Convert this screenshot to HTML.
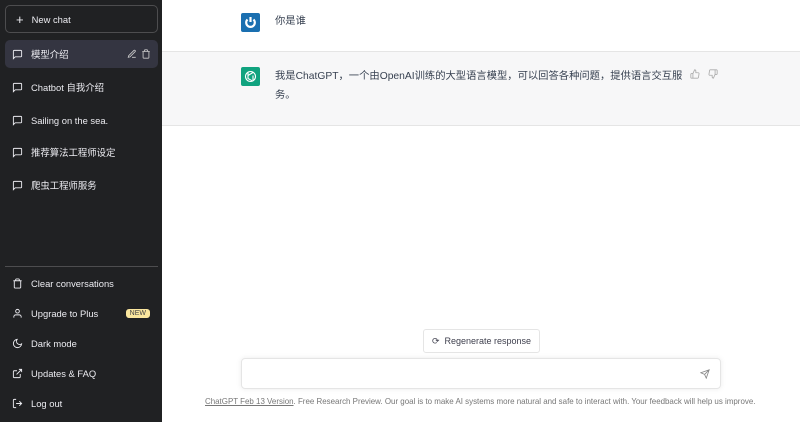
<!DOCTYPE html>
<html><head><meta charset="utf-8"><style>
*{margin:0;padding:0;box-sizing:border-box}
body{width:800px;height:422px;overflow:hidden;font-family:"Liberation Sans","Noto Sans CJK SC",sans-serif;background:#fff;position:relative}
.sb{position:absolute;left:0;top:0;width:162px;height:422px;background:#202123;color:#ececf1;font-size:9.4px}
.nc{position:absolute;left:5px;top:5px;width:153px;height:28px;border:1px solid #4d4d4f;border-radius:5px;display:flex;align-items:center;padding-left:10px}
.it{position:absolute;left:5px;width:153px;height:28px;display:flex;align-items:center;padding-left:7px;border-radius:5px}
.it svg{margin-right:8px;flex:none}
.sel{background:#343541}
.sep{position:absolute;left:5px;top:266px;width:153px;border-top:1px solid #4d4d4f}
.new{position:absolute;right:8px;background:#fae69e;color:#444;font-size:7px;padding:1px 4px;border-radius:3px}
.row{position:absolute;left:162px;width:638px}
.av{position:absolute;left:79px;width:19px;height:19px;border-radius:2px}
.tx{position:absolute;left:113px;font-size:10.3px;color:#374151;line-height:19px}
</style></head><body>
<div class="sb">
<div class="nc"><span style="font-size:13px;margin-right:8px">+</span>New chat</div>
<div class="it sel" style="top:40px"><svg width="11" height="11" viewBox="0 0 24 24" fill="none" stroke="#ececf1" stroke-width="2"><path d="M21 15a2 2 0 0 1-2 2H7l-4 4V5a2 2 0 0 1 2-2h14a2 2 0 0 1 2 2z"/></svg>模型介绍
<svg style="position:absolute;left:122px" width="10" height="10" viewBox="0 0 24 24" fill="none" stroke="#ccc" stroke-width="2"><path d="M12 20h9M16.5 3.5a2.1 2.1 0 0 1 3 3L7 19l-4 1 1-4z"/></svg>
<svg style="position:absolute;left:136px" width="10" height="10" viewBox="0 0 24 24" fill="none" stroke="#ccc" stroke-width="2"><path d="M3 6h18M19 6v14a2 2 0 0 1-2 2H7a2 2 0 0 1-2-2V6M8 6V4a2 2 0 0 1 2-2h4a2 2 0 0 1 2 2v2"/></svg></div>
<div class="it" style="top:73px"><svg width="11" height="11" viewBox="0 0 24 24" fill="none" stroke="#ececf1" stroke-width="2"><path d="M21 15a2 2 0 0 1-2 2H7l-4 4V5a2 2 0 0 1 2-2h14a2 2 0 0 1 2 2z"/></svg>Chatbot 自我介绍</div>
<div class="it" style="top:106px"><svg width="11" height="11" viewBox="0 0 24 24" fill="none" stroke="#ececf1" stroke-width="2"><path d="M21 15a2 2 0 0 1-2 2H7l-4 4V5a2 2 0 0 1 2-2h14a2 2 0 0 1 2 2z"/></svg>Sailing on the sea.</div>
<div class="it" style="top:138px"><svg width="11" height="11" viewBox="0 0 24 24" fill="none" stroke="#ececf1" stroke-width="2"><path d="M21 15a2 2 0 0 1-2 2H7l-4 4V5a2 2 0 0 1 2-2h14a2 2 0 0 1 2 2z"/></svg>推荐算法工程师设定</div>
<div class="it" style="top:171px"><svg width="11" height="11" viewBox="0 0 24 24" fill="none" stroke="#ececf1" stroke-width="2"><path d="M21 15a2 2 0 0 1-2 2H7l-4 4V5a2 2 0 0 1 2-2h14a2 2 0 0 1 2 2z"/></svg>爬虫工程师服务</div>
<div class="sep"></div>
<div class="it" style="top:269px"><svg width="11" height="11" viewBox="0 0 24 24" fill="none" stroke="#ececf1" stroke-width="2"><path d="M3 6h18M19 6v14a2 2 0 0 1-2 2H7a2 2 0 0 1-2-2V6M8 6V4a2 2 0 0 1 2-2h4a2 2 0 0 1 2 2v2"/></svg>Clear conversations</div>
<div class="it" style="top:299px"><svg width="11" height="11" viewBox="0 0 24 24" fill="none" stroke="#ececf1" stroke-width="2"><path d="M20 21v-2a4 4 0 0 0-4-4H8a4 4 0 0 0-4 4v2"/><circle cx="12" cy="7" r="4"/></svg>Upgrade to Plus<span class="new">NEW</span></div>
<div class="it" style="top:329px"><svg width="11" height="11" viewBox="0 0 24 24" fill="none" stroke="#ececf1" stroke-width="2"><path d="M21 12.8A9 9 0 1 1 11.2 3 7 7 0 0 0 21 12.8z"/></svg>Dark mode</div>
<div class="it" style="top:359px"><svg width="11" height="11" viewBox="0 0 24 24" fill="none" stroke="#ececf1" stroke-width="2"><path d="M18 13v6a2 2 0 0 1-2 2H5a2 2 0 0 1-2-2V8a2 2 0 0 1 2-2h6M15 3h6v6M10 14L21 3"/></svg>Updates &amp; FAQ</div>
<div class="it" style="top:389px"><svg width="11" height="11" viewBox="0 0 24 24" fill="none" stroke="#ececf1" stroke-width="2"><path d="M9 21H5a2 2 0 0 1-2-2V5a2 2 0 0 1 2-2h4M16 17l5-5-5-5M21 12H9"/></svg>Log out</div>
</div>
<div class="row" style="top:0;height:52px;background:#fff;border-bottom:1px solid #e5e5e5">
<div class="av" style="top:13px;background:#1a6fb0"><svg width="19" height="19" viewBox="0 0 19 19" fill="none" stroke="#fff" stroke-width="2.2"><path d="M6.5 6.5a4.3 4.3 0 1 0 6 0"/><path d="M9.5 4v5"/></svg></div>
<div class="tx" style="top:12px">你是谁</div>
</div>
<div class="row" style="top:52px;height:74px;background:#f7f7f8;border-bottom:1px solid #e5e5e5">
<div class="av" style="top:15px;background:#10a37f"><svg width="19" height="19" viewBox="0 0 19 19" fill="none" stroke="#fff" stroke-width="1.1"><circle cx="9.5" cy="9.5" r="5"/><path d="M7 5.5v6l4 2.2M12 5.5l-5 3M12 13.5v-5"/></svg></div>
<div class="tx" style="top:15px;width:412px">我是ChatGPT，一个由OpenAI训练的大型语言模型，可以回答各种问题，提供语言交互服务。</div>
<svg style="position:absolute;left:528px;top:17px" width="10" height="10" viewBox="0 0 24 24" fill="none" stroke="#aaa" stroke-width="2"><path d="M7 22H4a2 2 0 0 1-2-2v-7a2 2 0 0 1 2-2h3M14 9V5a3 3 0 0 0-3-3l-4 9v11h11.3a2 2 0 0 0 2-1.7l1.4-9A2 2 0 0 0 19.7 9z"/></svg>
<svg style="position:absolute;left:546px;top:17px" width="10" height="10" viewBox="0 0 24 24" fill="none" stroke="#aaa" stroke-width="2"><path d="M17 2h3a2 2 0 0 1 2 2v7a2 2 0 0 1-2 2h-3M10 15v4a3 3 0 0 0 3 3l4-9V2H5.7a2 2 0 0 0-2 1.7l-1.4 9A2 2 0 0 0 4.3 15z"/></svg>
</div>
<div style="position:absolute;left:423px;top:329px;width:117px;height:24px;border:1px solid #e5e5e5;border-radius:3px;font-size:9px;color:#40414f;display:flex;align-items:center;justify-content:center">⟳&nbsp; Regenerate response</div>
<div style="position:absolute;left:241px;top:358px;width:480px;height:31px;border:1px solid #e5e5e5;border-radius:4px;box-shadow:0 0 6px rgba(0,0,0,.08)"><svg style="position:absolute;right:10px;top:10px" width="10" height="10" viewBox="0 0 24 24" fill="none" stroke="#888" stroke-width="2"><path d="M22 2L11 13M22 2l-7 20-4-9-9-4z"/></svg></div>
<div style="position:absolute;left:205px;top:397px;font-size:7.95px;color:#777;white-space:nowrap"><u>ChatGPT Feb 13 Version</u>. Free Research Preview. Our goal is to make AI systems more natural and safe to interact with. Your feedback will help us improve.</div>
</body></html>
